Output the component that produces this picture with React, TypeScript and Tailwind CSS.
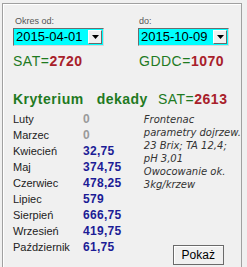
const months: { name: string; value: string; zero?: boolean }[] = [
  { name: 'Luty', value: '0', zero: true },
  { name: 'Marzec', value: '0', zero: true },
  { name: 'Kwiecień', value: '32,75' },
  { name: 'Maj', value: '374,75' },
  { name: 'Czerwiec', value: '478,25' },
  { name: 'Lipiec', value: '579' },
  { name: 'Sierpień', value: '666,75' },
  { name: 'Wrzesień', value: '419,75' },
  { name: 'Październik', value: '61,75' },
];

const noteLines = [
  'Frontenac',
  'parametry dojrzew.',
  '23 Brix; TA 12,4;',
  'pH 3,01',
  'Owocowanie ok.',
  '3kg/krzew',
];

function DateCombo({ value }: { value: string }) {
  return (
    <div className="w-[91px] h-[18px] flex border border-t-[#6d6d6d] border-l-[#6d6d6d] border-r-[#d8d8d8] border-b-[#d8d8d8] bg-[#00ffff]">
      <div className="flex-1 pl-[2px] text-[13px] leading-[16px] text-black">{value}</div>
      <div className="w-[14px] h-[14px] m-px bg-[#f0f0f0] border border-t-white border-l-white border-r-[#696969] border-b-[#696969] flex items-center justify-center">
        <svg width="7" height="4" viewBox="0 0 7 4">
          <path d="M0 0h7L3.5 4z" fill="#000" />
        </svg>
      </div>
    </div>
  );
}

function Sum({ label, value }: { label: string; value: string }) {
  return (
    <div className="text-[14px] leading-[16px] tracking-[0.5px] whitespace-nowrap">
      <span className="text-[#1f7a1f] font-normal">{label}=</span>
      <span className="text-[#a8202a] font-bold">{value}</span>
    </div>
  );
}

export default function App() {
  return (
    <div className="w-[247px] h-[267px] bg-[#f0f0f0] overflow-hidden pt-[3px] pl-[2px] font-['Liberation_Sans',Arial,sans-serif]">
      <div className="w-[240px] h-[290px] border border-[#a0a0a0] shadow-[inset_1px_1px_0_#fff] pl-[10px]">
        <div className="flex mt-[11px]">
          <div className="w-[125px]">
            <div className="text-[9px] leading-[12px] pl-[2px] text-[#555]">Okres od:</div>
            <div className="mt-px">
              <DateCombo value="2015-04-01" />
            </div>
            <div className="mt-[7px]">
              <Sum label="SAT" value="2720" />
            </div>
          </div>
          <div>
            <div className="text-[9px] leading-[12px] pl-[1px] text-[#555]">do:</div>
            <div className="mt-px">
              <DateCombo value="2015-10-09" />
            </div>
            <div className="mt-[7px] pl-[1px]">
              <Sum label="GDDC" value="1070" />
            </div>
          </div>
        </div>

        <div className="flex items-baseline mt-[22px] text-[14px] leading-[17px] font-bold tracking-[0.5px] text-[#1f7a1f] whitespace-nowrap">
          <span>Kryterium</span>
          <span className="ml-[13px]">dekady</span>
          <span className="ml-[10px]">
            <Sum label="SAT" value="2613" />
          </span>
        </div>

        <div className="flex mt-[3px]">
          <div className="w-[139px]">
            {months.map((m) => (
              <div key={m.name} className="flex h-[16px] items-center">
                <div className="w-[70px] text-[11px] text-[#222]">{m.name}</div>
                <div
                  className={
                    m.zero
                      ? 'text-[12px] font-bold text-[#9a9a9a]'
                      : 'text-[12px] font-bold tracking-[0.3px] text-[#1c1c96]'
                  }
                >
                  {m.value}
                </div>
              </div>
            ))}
          </div>
          <div className="flex flex-col">
            <div className="mt-[2px] font-['DejaVu_Sans',Verdana,sans-serif] italic text-[10px] leading-[13px] text-[#333] whitespace-nowrap">
              {noteLines.map((l) => (
                <div key={l}>{l}</div>
              ))}
            </div>
            <button className="mt-[54px] ml-[29px] w-[51px] h-[20px] border border-[#6a6a6a] bg-[#f0f0f0] shadow-[inset_1px_1px_0_#fff] text-[12px] leading-[16px] text-black">
              Pokaż
            </button>
          </div>
        </div>
      </div>
    </div>
  );
}
